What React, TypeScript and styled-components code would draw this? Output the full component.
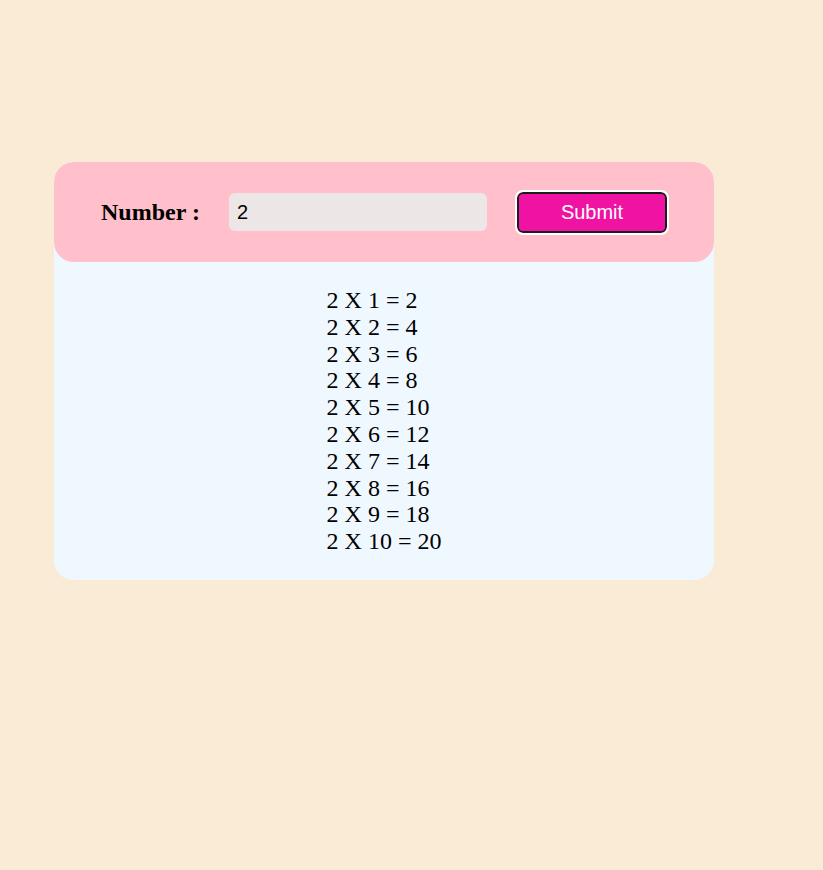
import React, { useState } from "react";
import styled, { createGlobalStyle } from "styled-components";

const Global = createGlobalStyle`
  html, body { background: #faebd7; }
  body { margin: 8px; font-family: "Liberation Serif", "Times New Roman", serif; }
`;

const Page = styled.div`
  padding: 154px 0 0 46px;
`;

const Card = styled.div`
  width: 660px;
  background: #f0f8ff;
  border-radius: 20px;
  display: flex;
  flex-direction: column;
`;

const Header = styled.form`
  height: 100px;
  background: #ffc0cb;
  border-radius: 20px;
  display: flex;
  align-items: center;
  padding: 0 0 0 47px;
  box-sizing: border-box;
`;

const Label = styled.label`
  font-family: "Liberation Serif", "Times New Roman", serif;
  font-weight: bold;
  font-size: 24px;
  color: #000;
  width: 128px;
`;

const Input = styled.input`
  width: 258px;
  height: 38px;
  box-sizing: border-box;
  border: none;
  border-radius: 6px;
  background: #ede6e6;
  font-family: "Liberation Sans", Arial, sans-serif;
  font-size: 20px;
  padding: 0 8px;
  color: #000;
  outline: none;
`;

const Button = styled.button`
  margin-left: 30px;
  width: 150px;
  height: 41px;
  box-sizing: border-box;
  background: #f012a2;
  border: 2.5px solid #1c1c1c;
  outline: 2px solid #fff;
  border-radius: 6px;
  color: #fff;
  font-family: "Liberation Sans", Arial, sans-serif;
  font-size: 20px;
  cursor: pointer;
`;

const Body = styled.div`
  display: flex;
  justify-content: center;
  padding: 25px 0 25px;
`;

const List = styled.div`
  display: flex;
  flex-direction: column;
  font-size: 24px;
  color: #000;
`;

const Line = styled.div`
  line-height: 26.8px;
`;

export default function App() {
  const [value, setValue] = useState("2");
  const [num, setNum] = useState(2);
  return (
    <>
      <Global />
      <Page>
        <Card>
          <Header
            onSubmit={(e) => {
              e.preventDefault();
              const n = Number(value);
              if (!Number.isNaN(n)) setNum(n);
            }}
          >
            <Label>Number :</Label>
            <Input value={value} onChange={(e) => setValue(e.target.value)} />
            <Button type="submit">Submit</Button>
          </Header>
          <Body>
            <List>
              {Array.from({ length: 10 }, (_, i) => (
                <Line key={i}>
                  {num} X {i + 1} = {num * (i + 1)}
                </Line>
              ))}
            </List>
          </Body>
        </Card>
      </Page>
    </>
  );
}
